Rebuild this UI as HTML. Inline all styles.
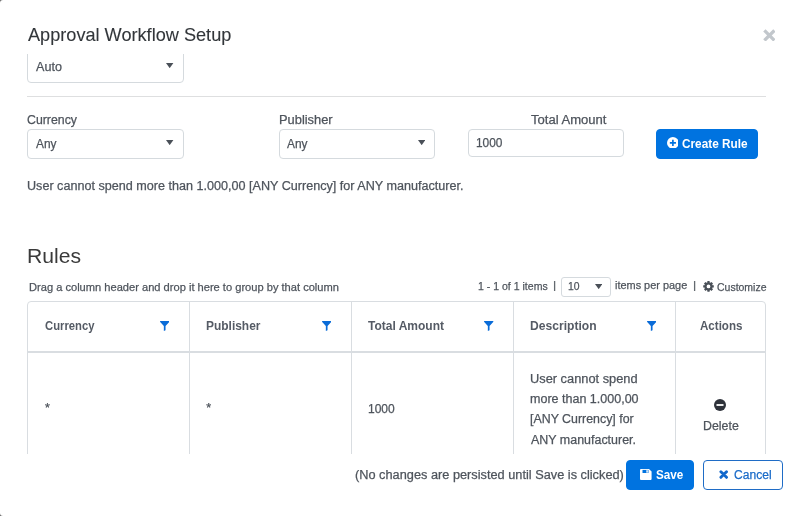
<!DOCTYPE html>
<html lang="en">
<head>
<meta charset="utf-8">
<title>Approval Workflow Setup</title>
<style>
html{margin:0;padding:0;background:#fff;}
body{margin:0;padding:0;background:#6a6a6a;}
body{width:793px;height:516px;position:relative;overflow:hidden;font-family:"Liberation Sans", sans-serif;}
.a{position:absolute;display:block;}
.t{position:absolute;white-space:pre;line-height:1;transform-origin:0 0;font-family:"Liberation Sans", sans-serif;}
.box{position:absolute;box-sizing:border-box;border:1px solid #d5dade;border-radius:4px;background:#fff;}
.btn{position:absolute;box-sizing:border-box;border-radius:4px;background:#0073e0;border:1px solid #0073e0;}
.btn.o{background:#fff;border-color:#1f6cc6;}
.vl{position:absolute;width:1px;background:#d9dde1;top:0;bottom:0;}
</style>
</head>
<body>
<div class="a" id="modal" style="will-change:transform;left:0;top:0;width:793px;height:516px;background:#fff;border-radius:3px 0 0 3px;">

<!-- header -->
<h5 style="margin:0"><span class="t" style="left:27.53px;top:25px;font-size:19px;font-weight:400;color:#32363a;-webkit-text-stroke:0.1px currentColor;transform:scaleX(0.9546)">Approval Workflow Setup</span></h5>
<svg class="a" style="left:762.5px;top:28.7px" width="12.8" height="12.8" viewBox="0 0 12 12"><path d="M1.3 1.3 L10.7 10.7 M10.7 1.3 L1.3 10.7" stroke="#c2c7cc" stroke-width="3.1" stroke-linecap="butt" fill="none"/></svg>

<!-- scrolled region: top select clipped by header -->
<div class="a" style="left:0;top:54px;width:793px;height:400px;overflow:hidden">
  <div class="box" style="left:27px;top:-6px;width:157px;height:34.5px;"></div>
</div>
<span class="t" style="left:35.72px;top:61px;font-size:12.5px;font-weight:400;color:#4e545c;-webkit-text-stroke:0.25px currentColor;transform:scaleX(1.0076)">Auto</span>
<svg class="a" style="left:166.2px;top:63.1px" width="7.4" height="5.2" viewBox="0 0 10 7"><path d="M0 0 H10 L5 7 Z" fill="#4a5058"/></svg>
<div class="a" style="left:27px;top:96px;width:739px;height:1px;background:#dedfe0"></div>

<!-- form row -->
<label><span class="t" style="left:27.32px;top:114px;font-size:12.5px;font-weight:400;color:#4e545c;-webkit-text-stroke:0.25px currentColor;transform:scaleX(0.9850)">Currency</span></label>
<div class="box" style="left:27px;top:129px;width:157px;height:30px;"></div>
<span class="t" style="left:35.80px;top:138px;font-size:12.5px;font-weight:400;color:#4e545c;-webkit-text-stroke:0.25px currentColor;transform:scaleX(0.9514)">Any</span>
<svg class="a" style="left:166.2px;top:140.1px" width="7.4" height="5.2" viewBox="0 0 10 7"><path d="M0 0 H10 L5 7 Z" fill="#4a5058"/></svg>
<label><span class="t" style="left:278.60px;top:114px;font-size:12.5px;font-weight:400;color:#4e545c;-webkit-text-stroke:0.25px currentColor;transform:scaleX(1.0288)">Publisher</span></label>
<div class="box" style="left:279px;top:129px;width:156px;height:30px;"></div>
<span class="t" style="left:287.00px;top:138px;font-size:12.5px;font-weight:400;color:#4e545c;-webkit-text-stroke:0.25px currentColor;transform:scaleX(0.9514)">Any</span>
<svg class="a" style="left:417.6px;top:140.1px" width="7.4" height="5.2" viewBox="0 0 10 7"><path d="M0 0 H10 L5 7 Z" fill="#4a5058"/></svg>
<label><span class="t" style="left:530.80px;top:114px;font-size:12.5px;font-weight:400;color:#4e545c;-webkit-text-stroke:0.25px currentColor;transform:scaleX(1.0448)">Total Amount</span></label>
<div class="box" style="left:468px;top:129px;width:156px;height:28px;"></div>
<span class="t" style="left:475.58px;top:137px;font-size:12.5px;font-weight:400;color:#4e545c;-webkit-text-stroke:0.25px currentColor;transform:scaleX(0.9515)">1000</span>
<div class="btn" style="left:656px;top:129px;width:102px;height:30px;"></div>
<svg class="a" style="left:666.5px;top:136.6px" width="11.8" height="11.8" viewBox="0 0 12 12"><circle cx="6" cy="6" r="6" fill="#fff"/><path d="M6 2.9 V9.1 M2.9 6 H9.1" stroke="#0073e0" stroke-width="1.7" fill="none"/></svg>
<span class="t" style="left:682.32px;top:138px;font-size:12.5px;font-weight:700;color:#ffffff;transform:scaleX(0.9428)">Create Rule</span>
<p style="margin:0"><span class="t" style="left:26.60px;top:180px;font-size:12.5px;font-weight:400;color:#4e545c;-webkit-text-stroke:0.25px currentColor;transform:scaleX(1.0078)">User cannot spend more than 1.000,00 [ANY Currency] for ANY manufacturer.</span></p>

<!-- rules -->
<h4 style="margin:0"><span class="t" style="left:27.08px;top:245px;font-size:21px;font-weight:400;color:#3a3a3a;transform:scaleX(1.0073)">Rules</span></h4>
<span class="t" style="left:29.03px;top:282px;font-size:11.5px;font-weight:400;color:#4e545c;-webkit-text-stroke:0.25px currentColor;transform:scaleX(0.9658)">Drag a column header and drop it here to group by that column</span>
<span class="t" style="left:478.36px;top:281px;font-size:11.5px;font-weight:400;color:#4e545c;-webkit-text-stroke:0.25px currentColor;transform:scaleX(0.9160)">1 - 1 of 1 items</span><span class="t" style="left:553.10px;top:280px;font-size:10.5px;font-weight:400;color:#5a6067;-webkit-text-stroke:0.2px currentColor;transform:scaleX(1.1500)">|</span>
<div class="box" style="left:561px;top:277px;width:50px;height:20px;border-radius:3px"></div>
<span class="t" style="left:568.23px;top:281px;font-size:11.5px;font-weight:400;color:#4e545c;-webkit-text-stroke:0.25px currentColor;transform:scaleX(0.9011)">10</span>
<svg class="a" style="left:594.6px;top:284.0px" width="7.4" height="5.2" viewBox="0 0 10 7"><path d="M0 0 H10 L5 7 Z" fill="#4a5058"/></svg>
<span class="t" style="left:615.17px;top:280px;font-size:11.5px;font-weight:400;color:#4e545c;-webkit-text-stroke:0.25px currentColor;transform:scaleX(0.9495)">items per page</span><span class="t" style="left:692.60px;top:280px;font-size:10.5px;font-weight:400;color:#5a6067;-webkit-text-stroke:0.2px currentColor;transform:scaleX(1.1500)">|</span>
<svg class="a" style="left:702.9px;top:281.1px" width="11" height="10.8" viewBox="0 0 24 24"><path fill="#4a5058" fill-rule="evenodd" d="M9.34 3.09 L9.57 0.25 L14.43 0.25 L14.66 3.09 L16.42 3.82 L18.59 1.97 L22.03 5.41 L20.18 7.58 L20.91 9.34 L23.75 9.57 L23.75 14.43 L20.91 14.66 L20.18 16.42 L22.03 18.59 L18.59 22.03 L16.42 20.18 L14.66 20.91 L14.43 23.75 L9.57 23.75 L9.34 20.91 L7.58 20.18 L5.41 22.03 L1.97 18.59 L3.82 16.42 L3.09 14.66 L0.25 14.43 L0.25 9.57 L3.09 9.34 L3.82 7.58 L1.97 5.41 L5.41 1.97 L7.58 3.82 Z M7.80 12 a4.2 4.2 0 1 0 8.4 0 a4.2 4.2 0 1 0 -8.4 0 Z"/></svg>
<span class="t" style="left:716.80px;top:282px;font-size:11.5px;font-weight:400;color:#4e545c;-webkit-text-stroke:0.25px currentColor;transform:scaleX(0.9111)">Customize</span>

<!-- grid -->
<div class="a" style="left:27px;top:301px;width:739px;height:153px;overflow:hidden">
  <div class="a" style="left:0;top:0;width:739px;height:300px;box-sizing:border-box;border:1px solid #d9dde1;border-radius:4px;"></div>
  <div class="vl" style="left:162px"></div>
  <div class="vl" style="left:324px"></div>
  <div class="vl" style="left:486px"></div>
  <div class="vl" style="left:648px"></div>
  <div class="a" style="left:0;top:50px;width:739px;height:2px;background:#d9dde1"></div>
</div>
<span class="t" style="left:45.00px;top:320px;font-size:12.5px;font-weight:700;color:#555b65;transform:scaleX(0.9018)">Currency</span><svg class="a" style="left:159.75px;top:321.1px" width="9.4" height="10" viewBox="0 0 9.4 10"><path d="M0.35 0 H9.05 Q9.7 0.35 9.2 0.95 L5.55 4.9 V9.2 L3.85 10 V4.9 L0.2 0.95 Q-0.3 0.35 0.35 0 Z" fill="#0a6cd8"/></svg>
<span class="t" style="left:205.96px;top:320px;font-size:12.5px;font-weight:700;color:#555b65;transform:scaleX(0.9561)">Publisher</span><svg class="a" style="left:321.9px;top:321.1px" width="9.4" height="10" viewBox="0 0 9.4 10"><path d="M0.35 0 H9.05 Q9.7 0.35 9.2 0.95 L5.55 4.9 V9.2 L3.85 10 V4.9 L0.2 0.95 Q-0.3 0.35 0.35 0 Z" fill="#0a6cd8"/></svg>
<span class="t" style="left:368.33px;top:320px;font-size:12.5px;font-weight:700;color:#555b65;transform:scaleX(0.9606)">Total Amount</span><svg class="a" style="left:484.2px;top:321.1px" width="9.4" height="10" viewBox="0 0 9.4 10"><path d="M0.35 0 H9.05 Q9.7 0.35 9.2 0.95 L5.55 4.9 V9.2 L3.85 10 V4.9 L0.2 0.95 Q-0.3 0.35 0.35 0 Z" fill="#0a6cd8"/></svg>
<span class="t" style="left:530.10px;top:320px;font-size:12.5px;font-weight:700;color:#555b65;transform:scaleX(0.9679)">Description</span><svg class="a" style="left:646.6px;top:321.1px" width="9.4" height="10" viewBox="0 0 9.4 10"><path d="M0.35 0 H9.05 Q9.7 0.35 9.2 0.95 L5.55 4.9 V9.2 L3.85 10 V4.9 L0.2 0.95 Q-0.3 0.35 0.35 0 Z" fill="#0a6cd8"/></svg>
<span class="t" style="left:699.71px;top:320px;font-size:12.5px;font-weight:700;color:#555b65;transform:scaleX(0.9262)">Actions</span>
<span class="t" style="left:45.00px;top:402px;font-size:12.5px;font-weight:400;color:#4e545c;-webkit-text-stroke:0.25px currentColor;transform:scaleX(1.0000)">*</span><span class="t" style="left:206.30px;top:402px;font-size:12.5px;font-weight:400;color:#4e545c;-webkit-text-stroke:0.25px currentColor;transform:scaleX(1.0000)">*</span><span class="t" style="left:368.04px;top:403px;font-size:12.5px;font-weight:400;color:#4e545c;-webkit-text-stroke:0.25px currentColor;transform:scaleX(0.9618)">1000</span>
<span class="t" style="left:529.96px;top:373px;font-size:12.5px;font-weight:400;color:#4e545c;-webkit-text-stroke:0.25px currentColor;transform:scaleX(1.0254)">User cannot spend</span><span class="t" style="left:530.18px;top:393px;font-size:12.5px;font-weight:400;color:#4e545c;-webkit-text-stroke:0.25px currentColor;transform:scaleX(1.0015)">more than 1.000,00</span><span class="t" style="left:530.31px;top:413px;font-size:12.5px;font-weight:400;color:#4e545c;-webkit-text-stroke:0.25px currentColor;transform:scaleX(0.9904)">[ANY Currency] for</span><span class="t" style="left:530.55px;top:434px;font-size:12.5px;font-weight:400;color:#4e545c;-webkit-text-stroke:0.25px currentColor;transform:scaleX(0.9963)">ANY manufacturer.</span>
<svg class="a" style="left:714px;top:399px" width="12" height="12" viewBox="0 0 12 12"><circle cx="6" cy="6" r="6" fill="#2e323a"/><rect x="2.5" y="5.1" width="7" height="1.8" fill="#fff"/></svg>
<span class="t" style="left:702.72px;top:420px;font-size:12.5px;font-weight:400;color:#4e545c;-webkit-text-stroke:0.25px currentColor;transform:scaleX(0.9897)">Delete</span>

<!-- footer -->
<span class="t" style="left:354.59px;top:469px;font-size:12.5px;font-weight:400;color:#4e545c;-webkit-text-stroke:0.25px currentColor;transform:scaleX(1.0209)">(No changes are persisted until Save is clicked)</span>
<div class="btn" style="left:626px;top:460px;width:68px;height:30px;"></div>
<svg class="a" style="left:640.3px;top:469px" width="11.6" height="10.9" viewBox="0 0 11.6 10.9"><path d="M1 0 H9 L11.6 2.6 V9.9 Q11.6 10.9 10.6 10.9 H1 Q0 10.9 0 9.9 V1 Q0 0 1 0 Z" fill="#fff"/><rect x="2.5" y="0.9" width="6" height="3.1" fill="#0073e0"/><rect x="6.2" y="1.2" width="1.9" height="2.5" fill="#d4e6f9"/></svg>
<span class="t" style="left:656.10px;top:469px;font-size:12.5px;font-weight:700;color:#ffffff;transform:scaleX(0.9348)">Save</span>
<div class="btn o" style="left:702.5px;top:460px;width:80.5px;height:30px;"></div>
<svg class="a" style="left:718.6px;top:470.1px" width="9.4" height="9.1" viewBox="0 0 12 12"><path d="M2.3 2.3 L9.7 9.7 M9.7 2.3 L2.3 9.7" stroke="#1268cc" stroke-width="3.8" stroke-linecap="round" fill="none"/></svg>
<span class="t" style="left:734.26px;top:469px;font-size:12.5px;font-weight:400;color:#1a6bc8;-webkit-text-stroke:0.25px currentColor;transform:scaleX(0.9662)">Cancel</span>

</div>
</body>
</html>
